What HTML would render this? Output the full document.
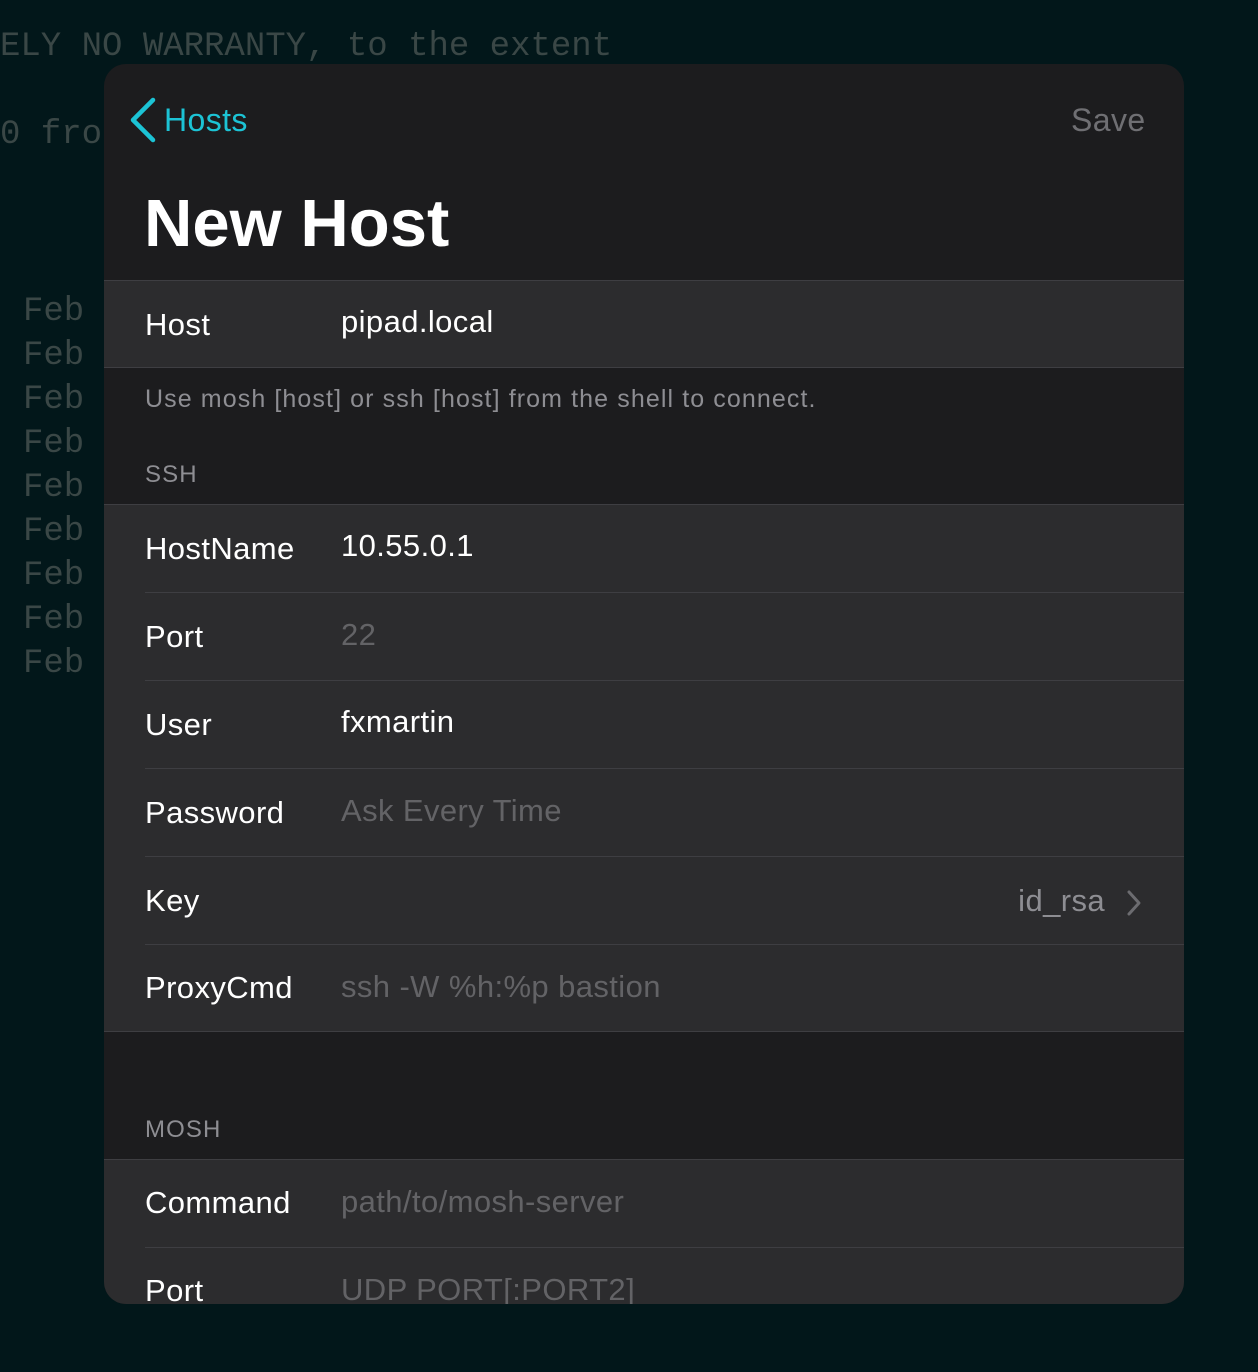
<!DOCTYPE html>
<html><head><meta charset="utf-8"><style>
*{margin:0;padding:0;box-sizing:border-box}
body{width:1258px;height:1372px;background:#02171a;position:relative;overflow:hidden;font-family:"Liberation Sans",sans-serif}
.t{position:absolute;font-family:"Liberation Mono",monospace;font-size:34px;color:#3a4746;line-height:40px;white-space:pre}
.modal{position:absolute;left:104px;top:64px;width:1080px;height:1240px;background:#1c1c1e;border-radius:22px;overflow:hidden}
.grp{position:absolute;left:0;width:1080px;background:#2c2c2e;border-top:1px solid #3e3e42;border-bottom:1px solid #3e3e42}
.sep{position:absolute;left:41px;right:0;height:1px;background:#3e3e42}
.x{position:absolute;line-height:40px;font-size:31px;white-space:nowrap;letter-spacing:0.4px}
.l{left:41px;color:#fff}
.v{left:237px;color:#fff}
.p{left:237px;color:#636366}
.h{left:41px;font-size:25px;color:#8e8e93;letter-spacing:1.1px}
</style></head><body>
<div class="t" style="left:0;top:27px">ELY NO WARRANTY, to the extent</div>
<div class="t" style="left:0;top:115px">0 fro</div>
<div class="t" style="left:23px;top:292px">Feb</div>
<div class="t" style="left:23px;top:336px">Feb</div>
<div class="t" style="left:23px;top:380px">Feb</div>
<div class="t" style="left:23px;top:424px">Feb</div>
<div class="t" style="left:23px;top:468px">Feb</div>
<div class="t" style="left:23px;top:512px">Feb</div>
<div class="t" style="left:23px;top:556px">Feb</div>
<div class="t" style="left:23px;top:600px">Feb</div>
<div class="t" style="left:23px;top:644px">Feb</div>

<div class="modal">
<svg style="position:absolute;left:24px;top:32px" width="32" height="48"><path d="M25 4 L5 24 L25 44" fill="none" stroke="#1cc3d5" stroke-width="4.5" stroke-linecap="round" stroke-linejoin="round"/></svg>
<div class="x" style="left:60px;top:36px;font-size:32px;color:#1cc3d5">Hosts</div>
<div class="x" style="left:967px;top:36px;font-size:32px;color:#6f6f73">Save</div>
<div class="x" style="left:40px;top:120px;font-size:67px;font-weight:bold;line-height:80px;color:#fff;letter-spacing:0">New Host</div>

<div class="grp" style="top:216px;height:88px">
<div class="x l" style="top:24px">Host</div>
<div class="x v" style="top:21px">pipad.local</div>
</div>
<div class="x h" style="top:315px">Use mosh [host] or ssh [host] from the shell to connect.</div>
<div class="x h" style="top:391px;font-size:24px">SSH</div>

<div class="grp" style="top:440px;height:528px">
<div class="x l" style="top:24px">HostName</div><div class="x v" style="top:21px">10.55.0.1</div>
<div class="sep" style="top:87px"></div>
<div class="x l" style="top:112px">Port</div><div class="x p" style="top:110px">22</div>
<div class="sep" style="top:175px"></div>
<div class="x l" style="top:200px">User</div><div class="x v" style="top:197px">fxmartin</div>
<div class="sep" style="top:263px"></div>
<div class="x l" style="top:288px">Password</div><div class="x p" style="top:286px">Ask Every Time</div>
<div class="sep" style="top:351px"></div>
<div class="x l" style="top:376px">Key</div><div class="x" style="right:79px;top:376px;color:#8e8e93">id_rsa</div>
<svg style="position:absolute;left:1020px;top:384px" width="20" height="30"><path d="M5 3 L15 14 L5 25" fill="none" stroke="#6c6c70" stroke-width="3" stroke-linecap="round" stroke-linejoin="round"/></svg>
<div class="sep" style="top:439px"></div>
<div class="x l" style="top:463px">ProxyCmd</div><div class="x p" style="top:462px">ssh -W %h:%p bastion</div>
</div>

<div class="x h" style="top:1046px;font-size:24px">MOSH</div>
<div class="grp" style="top:1095px;height:200px">
<div class="x l" style="top:23px">Command</div><div class="x p" style="top:22px">path/to/mosh-server</div>
<div class="sep" style="top:87px"></div>
<div class="x l" style="top:111px">Port</div><div class="x p" style="top:110px">UDP PORT[:PORT2]</div>
</div>
</div>
</body></html>
